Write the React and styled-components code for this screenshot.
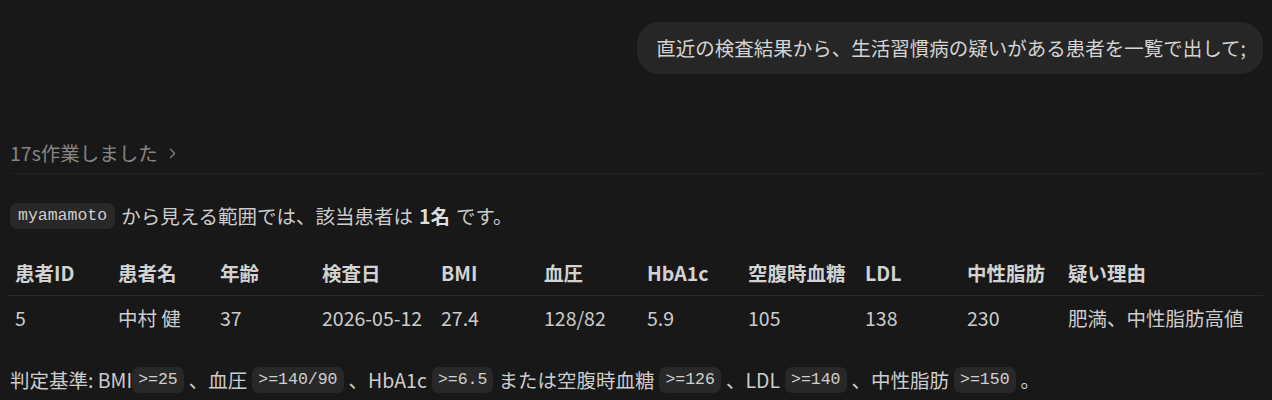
import React from 'react'
import styled, { createGlobalStyle } from 'styled-components'
import { ChevronRight } from 'lucide-react'

const GlobalStyle = createGlobalStyle`
  html, body {
    margin: 0;
    padding: 0;
    background: #181818;
  }
  body {
    font-family: "Noto Sans CJK JP", "Noto Sans", sans-serif;
    color: #cccccc;
    font-size: 19.5px;
    line-height: 28px;
  }
`

const Page = styled.div`
  padding: 22px 9px 0 10px;
  min-height: 400px;
  box-sizing: border-box;
`

const UserRow = styled.div`
  display: flex;
  justify-content: flex-end;
`

const Bubble = styled.div`
  background: #262626;
  color: #d4d4d4;
  border-radius: 22px;
  padding: 12px 17px 12px 19px;
`

const Worked = styled.div`
  margin-top: 65px;
  padding-bottom: 6px;
  border-bottom: 1px solid #222222;
  display: flex;
  align-items: center;
  gap: 6px;
  color: #858585;
`

const Para = styled.p`
  margin: 28px 0 0;
  display: flex;
  align-items: center;
  flex-wrap: wrap;
`

const Code = styled.code`
  font-family: "Liberation Mono", "DejaVu Sans Mono", monospace;
  font-size: 16.5px;
  background: #282828;
  color: #d0d0d0;
  border-radius: 7px;
  padding: 0 ${(p) => (p.$tight ? 6 : 8)}px;
  line-height: 26px;
  margin: 0 ${(p) => (p.$tight ? 5 : 6)}px;
  &:first-child {
    margin-left: 0;
  }
`

const Bold = styled.b`
  font-weight: 700;
  color: #dedede;
  margin: 0 6px;
`

const Table = styled.table`
  margin: 21px 0 0 -3px;
  width: calc(100% + 3px);
  border-collapse: collapse;
  table-layout: fixed;
`

const Th = styled.th`
  text-align: left;
  font-weight: 700;
  color: #d2d2d2;
  padding: 8px 8px;
  border-bottom: 1px solid #2a2a2a;
  white-space: nowrap;
`

const Td = styled.td`
  padding: 8px 8px;
  white-space: nowrap;
`

const Criteria = styled(Para)`
  margin-top: 26px;
`

const columns = [
  { label: '患者ID', w: 103 },
  { label: '患者名', w: 102 },
  { label: '年齢', w: 102 },
  { label: '検査日', w: 119 },
  { label: 'BMI', w: 103 },
  { label: '血圧', w: 103 },
  { label: 'HbA1c', w: 101 },
  { label: '空腹時血糖', w: 117 },
  { label: 'LDL', w: 102 },
  { label: '中性脂肪', w: 101 },
  { label: '疑い理由' },
]

const rows = [
  ['5', '中村 健', '37', '2026-05-12', '27.4', '128/82', '5.9', '105', '138', '230', '肥満、中性脂肪高値'],
]

export default function App() {
  return (
    <>
      <GlobalStyle />
      <Page>
        <UserRow>
          <Bubble>直近の検査結果から、生活習慣病の疑いがある患者を一覧で出して;</Bubble>
        </UserRow>

        <Worked>
          17s作業しました
          <ChevronRight size={17} strokeWidth={1.6} />
        </Worked>

        <Para>
          <Code>myamamoto</Code>から見える範囲では、該当患者は<Bold>1名</Bold>です。
        </Para>

        <Table>
          <colgroup>
            {columns.map((c) => (
              <col key={c.label} style={c.w ? { width: c.w } : undefined} />
            ))}
          </colgroup>
          <thead>
            <tr>
              {columns.map((c) => (
                <Th key={c.label}>{c.label}</Th>
              ))}
            </tr>
          </thead>
          <tbody>
            {rows.map((r) => (
              <tr key={r[0]}>
                {r.map((v, i) => (
                  <Td key={i}>{v}</Td>
                ))}
              </tr>
            ))}
          </tbody>
        </Table>

        <Criteria>
          判定基準: BMI<Code $tight>&gt;=25</Code>、血圧<Code $tight>&gt;=140/90</Code>、HbA1c
          <Code $tight>&gt;=6.5</Code>または空腹時血糖<Code $tight>&gt;=126</Code>、LDL
          <Code $tight>&gt;=140</Code>、中性脂肪<Code $tight>&gt;=150</Code>。
        </Criteria>
      </Page>
    </>
  )
}
